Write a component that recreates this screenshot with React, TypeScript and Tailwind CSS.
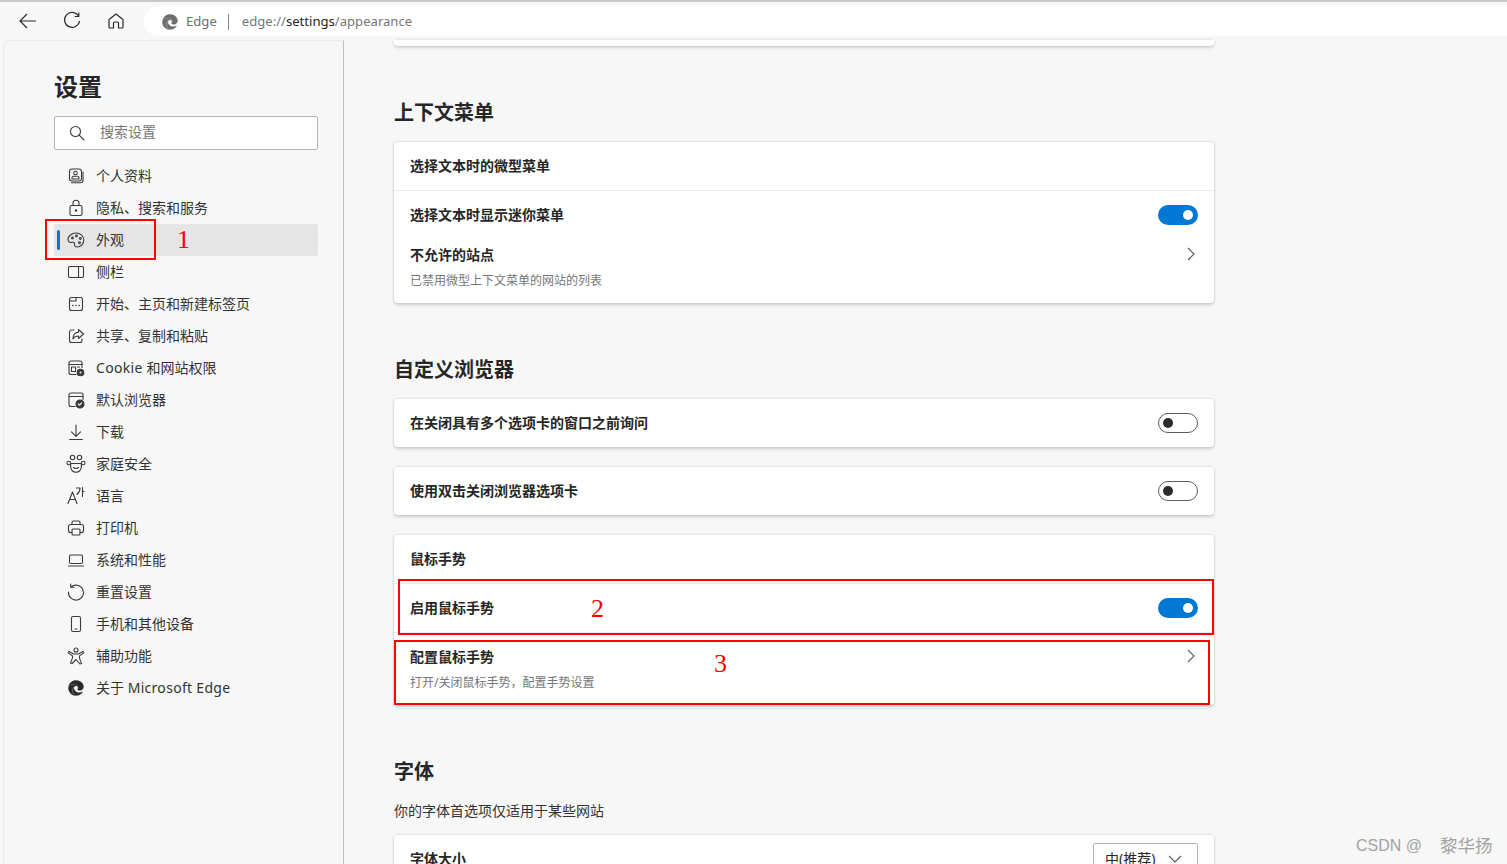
import React from "react";
import { FaEdge } from "react-icons/fa";

const FONT = "font-['Noto_Sans','Noto_Sans_CJK_SC',sans-serif]";

function Ico({ children, size = 20, className = "" }: { children: React.ReactNode; size?: number; className?: string }) {
  return (
    <svg width={size} height={size} viewBox="0 0 20 20" fill="none" stroke="#3b3b3b" strokeWidth={1.1} strokeLinecap="round" strokeLinejoin="round" className={className}>
      {children}
    </svg>
  );
}

const navItems: { key: string; label: React.ReactNode; active?: boolean; icon: React.ReactNode }[] = [
  { key: "profile", label: "个人资料", icon: <Ico><rect x="3.5" y="3" width="12" height="12" rx="2.5" /><path d="M5.5 16.8h9a2.5 2.5 0 0 0 2.5-2.5V6" /><circle cx="9.5" cy="7" r="1.8" /><path d="M6 13v-1.2c0-.9.7-1.6 1.6-1.6h3.8c.9 0 1.6.7 1.6 1.6V13z" /></Ico> },
  { key: "privacy", label: "隐私、搜索和服务", icon: <Ico><rect x="4" y="7.5" width="12" height="10" rx="1.6" /><path d="M7 7.5V5.2a3 3 0 0 1 6 0v2.3" /><circle cx="10" cy="12.5" r=".7" fill="#3b3b3b" /></Ico> },
  { key: "look", label: "外观", active: true, icon: <Ico><path d="M10 3c-4.3 0-8 3-8 6.600 0 2.400 2 3.200 3.900 2.700 1.500-.4 2.700.3 2.600 1.800-.1 1.600.7 2.900 2.500 2.900 3.900 0 6.800-3.300 6.800-7 0-3.900-3.300-7-7.800-7z" /><circle cx="6.500" cy="8" r=".9" /><circle cx="10.500" cy="6" r=".9" /><circle cx="14.300" cy="8.500" r=".9" /><circle cx="13.500" cy="12.800" r=".9" /></Ico> },
  { key: "side", label: "侧栏", icon: <Ico><rect x="2.500" y="4.500" width="15" height="11" rx="1.500" /><path d="M12.500 4.500v11" /></Ico> },
  { key: "start", label: "开始、主页和新建标签页", icon: <Ico><rect x="3.500" y="3.500" width="13" height="13" rx="2" /><path d="M3.500 7h6.500V3.500" /><path d="M6.800 11.500h.01M10 11.500h.01M13.200 11.500h.01" strokeWidth={1.6} /></Ico> },
  { key: "share", label: "共享、复制和粘贴", icon: <Ico><path d="M8 4H5.500a2 2 0 0 0-2 2v8.500a2 2 0 0 0 2 2H14a2 2 0 0 0 2-2V13" /><path d="M12.500 3.500 17.500 8l-5 4.500V10c-2.800 0-4.500 1-5.500 3 0-4 2-6.500 5.500-6.700z" /></Ico> },
  { key: "cookie", label: <><span className="tracking-[0.3px]">Cookie </span>和网站权限</>, icon: <Ico><path d="M10 16.500H5a2 2 0 0 1-2-2V5a2 2 0 0 1 2-2h9a2 2 0 0 1 2 2v4.500" /><path d="M3 6.500h13" /><rect x="5.500" y="9" width="4" height="4.500" /><path d="M11.500 9H13.500" /><circle cx="14.500" cy="14.500" r="3.300" fill="#3b3b3b" stroke="#3b3b3b" /><circle cx="14.500" cy="14.500" r="1" fill="#f7f7f7" stroke="none" /></Ico> },
  { key: "default", label: "默认浏览器", icon: <Ico><path d="M9 16.500H5a2 2 0 0 1-2-2V5a2 2 0 0 1 2-2h10a2 2 0 0 1 2 2v4.500" /><path d="M3 6.500h14" /><circle cx="14" cy="14" r="4" fill="#3b3b3b" /><path d="m12.300 14 1.200 1.200 2.200-2.300" stroke="#fff" /></Ico> },
  { key: "download", label: "下载", icon: <Ico><path d="M10 3v11M5.500 9.800 10 14.300l4.500-4.500M3.500 17.500h13" /></Ico> },
  { key: "family", label: "家庭安全", icon: <Ico><circle cx="6.500" cy="3.500" r="2.200" /><circle cx="13.500" cy="3.500" r="2.200" /><circle cx="2.800" cy="9" r="1.800" /><circle cx="17.200" cy="9" r="1.800" /><path d="M5.500 9.500h9c.4 0 .8.400.8.800V13a5.300 5.300 0 0 1-10.600 0v-2.700c0-.4.400-.8.800-.8z" /><path d="M7.500 13.500c1.300 1.300 3.700 1.300 5 0" /></Ico> },
  { key: "lang", label: "语言", icon: <Ico><path d="M2 17.500 6.500 6l4.500 11.500M3.500 13.500h6" /><path d="M10.500 2h3.500c0 3-1.200 5-3 6.500M16.500 1.500v9M16.500 5.500h1.500" /></Ico> },
  { key: "print", label: "打印机", icon: <Ico><path d="M6 6.500V4.500a1.500 1.500 0 0 1 1.500-1.500h5A1.500 1.500 0 0 1 14 4.500v2" /><path d="M6 14.500H4.500A2 2 0 0 1 2.500 12.500V8.500a2 2 0 0 1 2-2h11a2 2 0 0 1 2 2v4a2 2 0 0 1-2 2H14" /><rect x="6" y="11" width="8" height="6" rx="1" /></Ico> },
  { key: "system", label: "系统和性能", icon: <Ico><rect x="3.500" y="5" width="13" height="8.500" rx="1.200" /><path d="M2.500 16h15" /></Ico> },
  { key: "reset", label: "重置设置", icon: <Ico><path d="M5 5a7.500 7.500 0 1 1-2.500 5" /><path d="M4.700 2v3.300H8" /></Ico> },
  { key: "phone", label: "手机和其他设备", icon: <Ico><rect x="5.500" y="2.500" width="9" height="15" rx="1.600" /><path d="M9 15h2" /></Ico> },
  { key: "a11y", label: "辅助功能", icon: <Ico><circle cx="10" cy="4" r="2" /><path d="M3 5.500 7.500 8h5L17 5.500l.8 1.400-4.300 3v2.500l2 5-1.600.6L10 13.500l-3.900 4-1.600-.6 2-5V9.900L2.200 6.900z" /></Ico> },
];

function Toggle({ on }: { on: boolean }) {
  return on ? (
    <div className="flex h-5 w-10 shrink-0 items-center justify-end rounded-full bg-[#0078d4] pr-[5px]">
      <div className="size-2.5 rounded-full bg-white" />
    </div>
  ) : (
    <div className="flex h-5 w-10 shrink-0 items-center rounded-full border border-[#5d5d5d] bg-white pl-[4px]">
      <div className="size-2.5 rounded-full bg-[#2b2b2b]" />
    </div>
  );
}

function Chevron() {
  return (
    <svg width="8" height="14" viewBox="0 0 8 14" fill="none" stroke="#5c5c5c" strokeWidth="1.1" className="mr-[3px] mt-[-2px] shrink-0">
      <path d="m1 1 6 6-6 6" />
    </svg>
  );
}

const cardCls = "overflow-hidden rounded-[4px] bg-white shadow-[0_1.6px_3.6px_rgba(0,0,0,0.16),0_0_2.9px_rgba(0,0,0,0.11)]";

function Title({ children }: { children: React.ReactNode }) {
  return <div className="text-sm leading-5 font-semibold text-[#262626]">{children}</div>;
}

function Row({ title, on, border }: { title: string; on?: boolean; border?: boolean }) {
  return (
    <div className={`flex h-12 items-center justify-between px-4 ${border ? "box-content border-b border-[#ebebeb]" : ""}`}>
      <Title>{title}</Title>
      {on !== undefined && <Toggle on={on} />}
    </div>
  );
}

function LinkRow({ title, sub, className }: { title: string; sub: string; className: string }) {
  return (
    <div className={`flex justify-between px-4 ${className}`}>
      <div>
        <Title>{title}</Title>
        <div className="mt-[7px] text-xs leading-[18px] text-[#767676]">{sub}</div>
      </div>
      <div className="flex h-5 items-center">
        <Chevron />
      </div>
    </div>
  );
}

function Heading({ children }: { children: React.ReactNode }) {
  return <h2 className="mt-[52px] mb-[14px] text-xl leading-[30px] font-semibold text-[#262626]">{children}</h2>;
}

export default function App() {
  return (
    <div className={`relative flex h-[864px] w-full flex-col overflow-hidden bg-[#f7f7f7] text-[#262626] ${FONT}`}>
      {/* top strip + toolbar */}
      <div className="h-[2px] shrink-0 bg-[#c9c9c9]" />
      <div className="flex h-[38px] shrink-0 items-start pt-1">
        <div className="ml-[17px] flex h-[30px] w-[22px] items-center justify-center">
          <svg width="20" height="20" viewBox="0 0 20 20" fill="none" stroke="#2b2b2b" strokeWidth="1.2"><path d="M18 10H2M9 3l-7 7 7 7" /></svg>
        </div>
        <div className="ml-[22px] flex h-[30px] w-[22px] items-center justify-center">
          <svg width="20" height="20" viewBox="0 0 20 20" fill="none" stroke="#2b2b2b" strokeWidth="1.2"><path d="M16.500 5A7.500 7.500 0 1 0 17.500 10" /><path d="M16.800 1.500V5.500H12.800" /></svg>
        </div>
        <div className="ml-[22px] flex h-[30px] w-[22px] items-center justify-center">
          <svg width="18" height="18" viewBox="0 0 18 18" fill="none" stroke="#2b2b2b" strokeWidth="1.2" strokeLinejoin="round"><path d="M2 7.500 9 2l7 5.500V15a1 1 0 0 1-1 1h-3.500v-5a1 1 0 0 0-1-1h-3a1 1 0 0 0-1 1v5H3a1 1 0 0 1-1-1z" /></svg>
        </div>
        <div className="ml-[17px] flex h-[30px] flex-1 items-center rounded-l-full bg-white pt-[1px] pl-[18px] text-[13.1px]">
          <FaEdge size={16} color="#6e6e6e" />
          <span className="ml-2 text-[#6e6e6e]">Edge</span>
          <span className="ml-[11px] h-4 w-px bg-[#8a8a8a]" />
          <span className="ml-[13px] text-[#767676]">edge://<span className="text-[#1f1f1f]">settings</span>/appearance</span>
        </div>
      </div>

      {/* body */}
      <div className="flex min-h-0 flex-1 pl-[3px]">
        <aside className="w-[341px] shrink-0 rounded-tl-lg border-t border-r border-l border-t-[#ececec] border-r-[#bdbdbd] border-l-[#ececec] pl-[50px]">
          <h1 className="mt-[31px] text-2xl leading-[30px] font-semibold text-[#262626]">设置</h1>
          <div className="mt-[14px] flex h-[34px] w-[264px] items-center rounded-[2px] border border-[#b5b5b5] bg-white pl-[14px]">
            <svg width="16" height="16" viewBox="0 0 16 16" fill="none" stroke="#3b3b3b" strokeWidth="1.1" strokeLinecap="round"><circle cx="6.500" cy="6.500" r="5" /><path d="m10.200 10.200 4.800 4.800" /></svg>
            <span className="mb-[2px] ml-[15px] text-sm leading-5 text-[#767676]">搜索设置</span>
          </div>
          <nav className="mt-[10px] w-[264px]">
            {navItems.map((it) => (
              <div key={it.key} className={`relative flex h-8 items-center text-sm ${it.active ? "rounded-[2px] bg-[#e5e5e5]" : ""}`}>
                {it.active && <span className="absolute left-[3px] top-[6px] h-5 w-[3px] rounded-full bg-[#0078d4]" />}
                <span className="flex w-[42px] shrink-0 justify-center pl-[2px]">{it.icon}</span>
                <span className="text-[#333333]">{it.label}</span>
              </div>
            ))}
            <div className="flex h-8 items-center text-sm">
              <span className="flex w-[42px] shrink-0 justify-center pl-[2px]"><FaEdge size={16} color="#2b2b2b" /></span>
              <span className="text-[#333333]">关于 <span className="tracking-[0.3px]">Microsoft Edge</span></span>
            </div>
          </nav>
        </aside>

        <main className="ml-[50px] w-[820px] shrink-0">
          <div className="h-[6px] rounded-b-[4px] bg-white shadow-[0_1.6px_3.6px_rgba(0,0,0,0.16),0_0_2.9px_rgba(0,0,0,0.11)]" />

          <Heading>上下文菜单</Heading>
          <section className={cardCls}>
            <Row title="选择文本时的微型菜单" border />
            <Row title="选择文本时显示迷你菜单" on />
            <LinkRow title="不允许的站点" sub="已禁用微型上下文菜单的网站的列表" className="h-16 pt-[6px]" />
          </section>

          <Heading>自定义浏览器</Heading>
          <section className={cardCls}>
            <Row title="在关闭具有多个选项卡的窗口之前询问" on={false} />
          </section>
          <section className={`mt-5 ${cardCls}`}>
            <Row title="使用双击关闭浏览器选项卡" on={false} />
          </section>
          <section className={`mt-5 ${cardCls}`}>
            <Row title="鼠标手势" border />
            <Row title="启用鼠标手势" on border />
            <LinkRow title="配置鼠标手势" sub="打开/关闭鼠标手势，配置手势设置" className="h-[72px] pt-[14px]" />
          </section>

          <Heading>字体</Heading>
          <div className="mb-[14px] text-sm leading-5 text-[#333333]">你的字体首选项仅适用于某些网站</div>
          <section className={`flex h-16 justify-between px-4 pt-2 ${cardCls}`}>
            <div className="mt-[6px]"><Title>字体大小</Title></div>
            <div className="flex h-8 w-[105px] items-center rounded-[2px] border border-[#b5b5b5] bg-white pl-[11px] text-sm">
              <span>中(推荐)</span>
              <svg width="14" height="8" viewBox="0 0 14 8" fill="none" stroke="#5c5c5c" strokeWidth="1.1" className="ml-[13px]"><path d="m1 1 6 6 6-6" /></svg>
            </div>
          </section>
        </main>
      </div>

      {/* annotations drawn over the page */}
      <div className="absolute left-[45px] top-[219px] h-[41px] w-[111px] border-2 border-[#ff0000]" />
      <div className="absolute left-[398px] top-[579px] h-[56px] w-[816px] border-2 border-[#ff0000]" />
      <div className="absolute left-[394px] top-[640px] h-[65px] w-[816px] border-2 border-[#ff0000]" />
      <span className="absolute left-[177px] top-[226px] font-['Liberation_Serif',serif] text-[26px] leading-7 text-[#ff0000]">1</span>
      <span className="absolute left-[591px] top-[595px] font-['Liberation_Serif',serif] text-[26px] leading-7 text-[#ff0000]">2</span>
      <span className="absolute left-[714px] top-[650px] font-['Liberation_Serif',serif] text-[26px] leading-7 text-[#ff0000]">3</span>
      <div className="absolute left-[1356px] top-[834px] flex items-center font-['Liberation_Sans','Noto_Sans_CJK_SC',sans-serif] text-[#a3a3a3]">
        <span className="text-base leading-6">CSDN @</span>
        <span className="ml-[18px] text-[17.5px] leading-6">黎华扬</span>
      </div>
    </div>
  );
}
